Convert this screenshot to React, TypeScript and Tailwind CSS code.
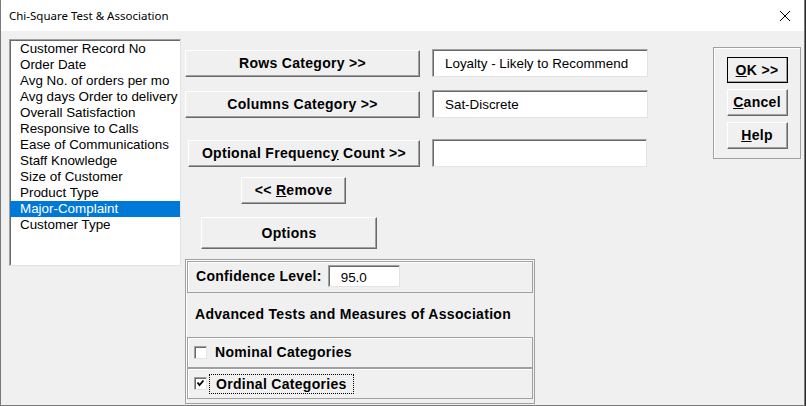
import React from "react";

const fields = [
    "Customer Record No",
    "Order Date",
    "Avg No. of orders per mo",
    "Avg days Order to delivery",
    "Overall Satisfaction",
    "Responsive to Calls",
    "Ease of Communications",
    "Staff Knowledge",
    "Size of Customer",
    "Product Type",
    "Major-Complaint",
    "Customer Type",
];

const btn =
    "flex items-center justify-center bg-[#f0f0f0] border border-t-white border-l-white border-b-[#696969] border-r-[#696969] shadow-[inset_-1px_-1px_0_#a0a0a0] font-bold text-[14px] tracking-[0.3px] text-black";

const box =
    "bg-white border border-t-[#a0a0a0] border-l-[#a0a0a0] border-b-[#e3e3e3] border-r-[#e3e3e3] shadow-[inset_1px_1px_0_#696969] text-[13.4px] text-black";

const frame = "border border-[#a0a0a0] shadow-[inset_1px_1px_0_#fff]";

const Check = ({ checked }: { checked?: boolean }) => (
    <div className={`w-[13px] h-[13px] flex items-center justify-center ${box}`}>
        {checked && (
            <svg width="9" height="9" viewBox="0 0 9 9">
                <path d="M1.5 3.5 L3.5 6 L7.5 1.5" stroke="#000" strokeWidth="1.8" fill="none" />
            </svg>
        )}
    </div>
);

const App: React.FC = () => {
    return (
        <div className="w-[806px] h-[406px] bg-[#2b2b2b] font-['Liberation_Sans',Arial,sans-serif]">
            <div className="w-[805px] h-[406px] flex flex-col border border-t-0 border-[#7a7a7a] bg-[#f0f0f0]">

                {/* title bar */}
                <div className="h-[31px] bg-white flex items-center justify-between pl-[8px] pr-[13px] shrink-0">
                    <span className="text-[11.5px] text-black font-['Noto_Sans',sans-serif]">Chi-Square Test &amp; Association</span>
                    <svg width="12" height="12" viewBox="0 0 12 12">
                        <path d="M1 1 L11 11 M11 1 L1 11" stroke="#000" strokeWidth="1" />
                    </svg>
                </div>

                <div className="flex items-start pl-[8px] pt-[8px]">

                    {/* field list */}
                    <div className={`w-[172px] h-[227px] pt-[1px] ${box}`}>
                        {fields.map((f) => (
                            <div
                                key={f}
                                className={`h-[16px] leading-[16px] pl-[10px] whitespace-nowrap ${f === "Major-Complaint" ? "bg-[#0078d7] text-white" : ""}`}
                            >
                                {f}
                            </div>
                        ))}
                    </div>

                    {/* middle column */}
                    <div className="ml-[4px] w-[463px] flex flex-col">
                        <div className="mt-[10px] flex items-center">
                            <div className={`${btn} w-[235px] h-[27px]`}>Rows Category &gt;&gt;</div>
                            <div className={`${box} ml-[12px] w-[216px] h-[28px] pl-[12px] pt-[4px]`}>Loyalty - Likely to Recommend</div>
                        </div>
                        <div className="mt-[13px] flex items-center">
                            <div className={`${btn} w-[235px] h-[27px]`}>Columns Category &gt;&gt;</div>
                            <div className={`${box} ml-[12px] w-[216px] h-[28px] pl-[12px] pt-[4px]`}>Sat-Discrete</div>
                        </div>
                        <div className="mt-[21px] flex items-center">
                            <div className={`${btn} ml-[3px] w-[232px] h-[27px]`}>
                                Optional Frequenc<span className="underline">y</span>&nbsp;Count &gt;&gt;
                            </div>
                            <div className={`${box} ml-[12px] w-[215px] h-[28px]`} />
                        </div>
                        <div className={`${btn} mt-[10px] ml-[56px] w-[105px] h-[27px]`}>
                            &lt;&lt;&nbsp;<span className="underline">R</span>emove
                        </div>
                        <div className={`${btn} mt-[13px] ml-[16px] w-[176px] h-[32px]`}>Options</div>

                        {/* options frame */}
                        <div className={`mt-[10px] w-[350px] h-[145px] p-[1px] flex flex-col ${frame}`}>
                            <div className={`h-[32px] flex items-center pl-[8px] pb-[2px] ${frame}`}>
                                <span className="font-bold text-[14px] tracking-[0.3px]">Confidence Level:</span>
                                <div className={`${box} ml-[6px] w-[72px] h-[22px] pl-[12px] pt-[2px]`}>95.0</div>
                            </div>
                            <div className="h-[44px] flex items-center pl-[8px] pb-[2px] font-bold text-[14px] tracking-[0.3px]">
                                Advanced Tests and Measures of Association
                            </div>
                            <div className={`h-[31px] flex items-center pl-[6px] ${frame}`}>
                                <Check />
                                <span className="ml-[8px] font-bold text-[14px] tracking-[0.3px]">Nominal Categories</span>
                            </div>
                            <div className={`h-[31px] flex items-center pl-[6px] ${frame}`}>
                                <Check checked />
                                <span className="ml-[2px] px-[6px] h-[20px] leading-[18px] border border-dotted border-black font-bold text-[14px] tracking-[0.3px]">
                                    Ordinal Categories
                                </span>
                            </div>
                        </div>
                    </div>

                    {/* right buttons */}
                    <div className={`ml-[65px] mt-[8px] w-[88px] h-[112px] flex flex-col items-center pt-[9px] gap-[6px] ${frame}`}>
                        <div className={`${btn} w-[61px] h-[26px] outline outline-1 outline-black -outline-offset-1`}>
                            <span className="underline">O</span>K&nbsp;&gt;&gt;
                        </div>
                        <div className={`${btn} w-[61px] h-[27px]`}>
                            <span className="underline">C</span>ancel
                        </div>
                        <div className={`${btn} w-[61px] h-[27px]`}>
                            <span className="underline">H</span>elp
                        </div>
                    </div>
                </div>
            </div>
        </div>
    );
};

export default App;
